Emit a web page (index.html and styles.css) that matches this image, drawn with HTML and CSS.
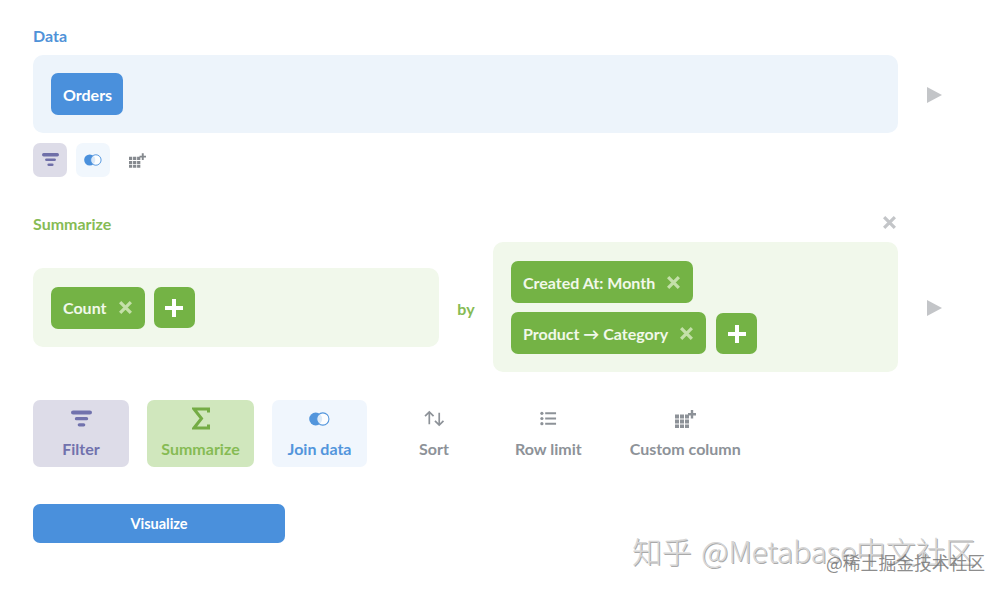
FILE: index.html
```html
<!DOCTYPE html>
<html lang="en">
<head>
<meta charset="UTF-8" />
<title>Notebook editor</title>
<link rel="stylesheet" href="styles.css">
</head>
<body>
  <svg class="defs" aria-hidden="true">
    <symbol id="i-filter" viewBox="0 0 22 18">
      <rect x="0" y="0" width="22" height="4.400" rx="2.200" fill="currentColor"/>
      <rect x="4" y="7" width="14" height="3.400" rx="1.700" fill="currentColor"/>
      <rect x="7" y="13.400" width="8" height="3.400" rx="1.700" fill="currentColor"/>
    </symbol>
    <symbol id="i-join" viewBox="0 0 22 14">
      <circle cx="7" cy="7" r="6.800" fill="currentColor"/>
      <circle cx="14.500" cy="7" r="6.400" fill="#fff" fill-opacity=".8" stroke="currentColor" stroke-width="1.100"/>
    </symbol>
    <symbol id="i-grid" viewBox="0 0 21 18">
      <path fill="currentColor" d="M0 4.500h4v4H0zM5 4.500h4v4H5zM10 4.500h4v4h-4zM0 9.500h4v4H0zM5 9.500h4v4H5zM10 9.500h4v4h-4zM0 14.500h4v3.500H0zM5 14.500h4v3.500H5zM10 14.500h4v3.500h-4z"/>
      <path fill="currentColor" d="M15.800 0h2.400v3h2.800v2.400h-2.800v3h-2.400v-3H13V3h2.800z"/>
    </symbol>
    <symbol id="i-x" viewBox="0 0 14 14">
      <path d="M2 2l10 10M12 2L2 12" fill="none" stroke="currentColor" stroke-width="3"/>
    </symbol>
    <symbol id="i-plus" viewBox="0 0 18 18">
      <path d="M9 0v18M0 9h18" fill="none" stroke="currentColor" stroke-width="4"/>
    </symbol>
  </svg>

  <main class="editor">
    <section class="step">
      <h2 class="step-title blue">Data</h2>
      <div class="step-row">
        <div class="panel panel-blue panel-data">
          <button class="chip chip-blue">Orders</button>
        </div>
        <span class="run-arrow"></span>
      </div>
      <div class="mini-actions">
        <span class="mini mini-filter"><svg class="mini-icon-filter"><use href="#i-filter"/></svg></span>
        <span class="mini mini-join"><svg class="mini-icon-join"><use href="#i-join"/></svg></span>
        <span class="mini mini-custom"><svg class="mini-icon-grid"><use href="#i-grid"/></svg></span>
      </div>
    </section>

    <section class="step step-summarize">
      <div class="step-head">
        <h2 class="step-title green">Summarize</h2>
        <svg class="step-close"><use href="#i-x"/></svg>
      </div>
      <div class="step-row">
        <div class="summarize-body">
          <div class="panel panel-green panel-aggs">
            <button class="chip chip-green">Count <svg class="chip-x"><use href="#i-x"/></svg></button>
            <button class="add-btn"><svg><use href="#i-plus"/></svg></button>
          </div>
          <span class="by">by</span>
          <div class="panel panel-green panel-breakouts">
            <div class="chip-line">
              <button class="chip chip-green">Created At: Month <svg class="chip-x"><use href="#i-x"/></svg></button>
            </div>
            <div class="chip-line">
              <button class="chip chip-green">Product → Category <svg class="chip-x"><use href="#i-x"/></svg></button>
              <button class="add-btn"><svg><use href="#i-plus"/></svg></button>
            </div>
          </div>
        </div>
        <span class="run-arrow"></span>
      </div>
    </section>

    <div class="actions">
      <button class="action action-filter"><svg class="icon-filter"><use href="#i-filter"/></svg>Filter</button>
      <button class="action action-summarize"><svg class="icon-sigma" viewBox="0 0 18 22"><path d="M16.500 5V1.500H2l7.500 9.500L2 20.500h14.500V17" fill="none" stroke="currentColor" stroke-width="3"/></svg>Summarize</button>
      <button class="action action-join"><svg class="icon-join"><use href="#i-join"/></svg>Join data</button>
      <button class="action action-sort"><svg class="icon-sort" viewBox="0 0 22 18"><path d="M5.500 15V2M1 6.500l4.500-4.500L10 6.500M16 3v13M11.500 11.500L16 16l4.500-4.500" fill="none" stroke="currentColor" stroke-width="1.800"/></svg>Sort</button>
      <button class="action"><svg class="icon-rows" viewBox="0 0 18 15"><circle cx="2" cy="2" r="1.700" fill="currentColor"/><circle cx="2" cy="7.500" r="1.700" fill="currentColor"/><circle cx="2" cy="13" r="1.700" fill="currentColor"/><path d="M5.500 2H17M5.500 7.500H17M5.500 13H17" stroke="currentColor" stroke-width="2"/></svg>Row limit</button>
      <button class="action"><svg class="icon-grid"><use href="#i-grid"/></svg>Custom column</button>
    </div>

    <button class="visualize">Visualize</button>
  </main>

  <div class="mark-zhihu">知乎 @Metabase中文社区</div>
  <div class="mark-juejin">@稀土掘金技术社区</div>
</body>
</html>
```

FILE: styles.css
```css
:root {
  --blue:#4a90dc;
  --blue-bg:#edf4fb;
  --green:#74b345;
  --green-text:#86bb54;
  --green-bg:#f1f8eb;
  --purple:#7172ad;
  --gray:#8d9298;
}
*,*::before,*::after{box-sizing:border-box;}
html,body{height:100%;}
body {
  margin:0;background:#fff;font-family:Lato,"Noto Sans CJK SC",sans-serif;overflow:hidden;position:relative;
}
button{font:inherit;border:0;padding:0;cursor:pointer;}
.defs{display:none;}
.editor{padding:27px 0 0 33px;}

.step-title{margin:0;font-size:16px;line-height:18px;font-weight:700;}
.blue{color:#4f92d8;}
.green{color:var(--green-text);}
.step-title.blue{margin-bottom:10px;}
.step-row{display:flex;align-items:center;}
.run-arrow {
  flex:none;width:0;height:0;margin:2px 0 0 29px;
  border-left:15px solid #c3c5c8;border-top:8px solid transparent;border-bottom:8px solid transparent;
}
.panel{flex:none;border-radius:10px;}
.panel-blue{background:var(--blue-bg);}
.panel-green{background:var(--green-bg);}
.panel-data{width:865px;height:78px;padding:18px;}

.chip {
  display:inline-flex;align-items:center;height:42px;padding:0 12px;border-radius:7px;
  color:#fff;font-size:16px;font-weight:700;white-space:nowrap;
}
.chip-blue{background:var(--blue);padding-right:11px;}
.chip-green{background:var(--green);color:#f1f8ea;}
.chip-x{width:15px;height:15px;margin-left:11px;color:#c4e0a9;}
.add-btn {
  display:inline-flex;align-items:center;justify-content:center;width:41px;height:41px;
  border-radius:7px;background:var(--green);color:#fff;
}
.add-btn svg{width:18px;height:18px;}

.mini-actions{display:flex;gap:9px;margin-top:10px;}
.mini{display:flex;align-items:center;justify-content:center;width:34px;height:34px;border-radius:7px;}
.mini-filter{background:#dddce8;color:#6f6fa8;}
.mini-join{background:#f1f7fd;color:var(--blue);}
.mini-custom{color:#85898e;margin-left:1px;}
.mini-icon-filter{width:17px;height:14px;}
.mini-icon-join{width:18px;height:12px;}
.mini-icon-grid{width:17px;height:15px;}

.step-summarize{margin-top:38px;}
.step-head{display:flex;align-items:flex-start;justify-content:space-between;width:865px;margin-bottom:9px;}
.step-close{width:15px;height:15px;margin-right:1px;color:#c3c5c8;}
.summarize-body{flex:none;display:flex;align-items:center;width:865px;}
.panel-aggs{display:flex;align-items:center;gap:9px;width:406px;height:79px;padding:1px 18px 0;}
.by{flex:1;text-align:center;font-size:16px;font-weight:700;color:var(--green-text);position:relative;top:1px;}
.panel-breakouts {
  display:flex;flex-direction:column;gap:9px;width:405px;height:130px;padding:19px 18px 0;
}
.chip-line{display:flex;align-items:flex-end;gap:10px;}

.actions{display:flex;gap:18px;margin-top:28px;}
.action {
  display:flex;flex-direction:column;align-items:center;justify-content:space-between;
  min-width:96px;height:67px;padding:10px 15px 9px;border-radius:7px;background:none;
  color:var(--gray);font-size:16px;font-weight:700;white-space:nowrap;
}
.action svg{flex:none;}
.action-filter{background:#dddce8;color:var(--purple);}
.action-summarize{background:#d0e7bd;color:var(--green-text);min-width:107px;padding:7px 14px 9px;}
.action-join{background:#f0f6fd;color:#5295dc;min-width:95px;padding:10px 14px 9px;}
.action-sort{margin-left:1px;}
.icon-filter{width:21px;height:18px;}
.icon-sigma{width:18px;height:23px;color:#74ac45;}
.icon-join{width:21px;height:14px;margin-top:2px;}
.icon-sort{width:21px;height:17px;}
.icon-rows{width:17px;height:15px;margin-top:1px;}
.icon-grid{width:21px;height:18px;}

.visualize {
  display:block;width:252px;height:39px;margin-top:37px;border-radius:7px;
  background:var(--blue);color:#fff;font-size:14.500px;font-weight:700;
}

.mark-zhihu {
  position:absolute;left:632px;top:530px;font-family:"Noto Sans CJK SC",sans-serif;font-size:30px;line-height:40px;font-weight:300;
  word-spacing:3px;letter-spacing:-.2px;color:#d6d6d6;text-shadow:1px 1px 0 #aaa;white-space:nowrap;
}
.mark-juejin {
  position:absolute;left:826px;top:550px;font-family:"Noto Sans CJK SC",sans-serif;font-size:17.800px;line-height:24px;
  color:rgba(110,110,110,.8);white-space:nowrap;
}
```
